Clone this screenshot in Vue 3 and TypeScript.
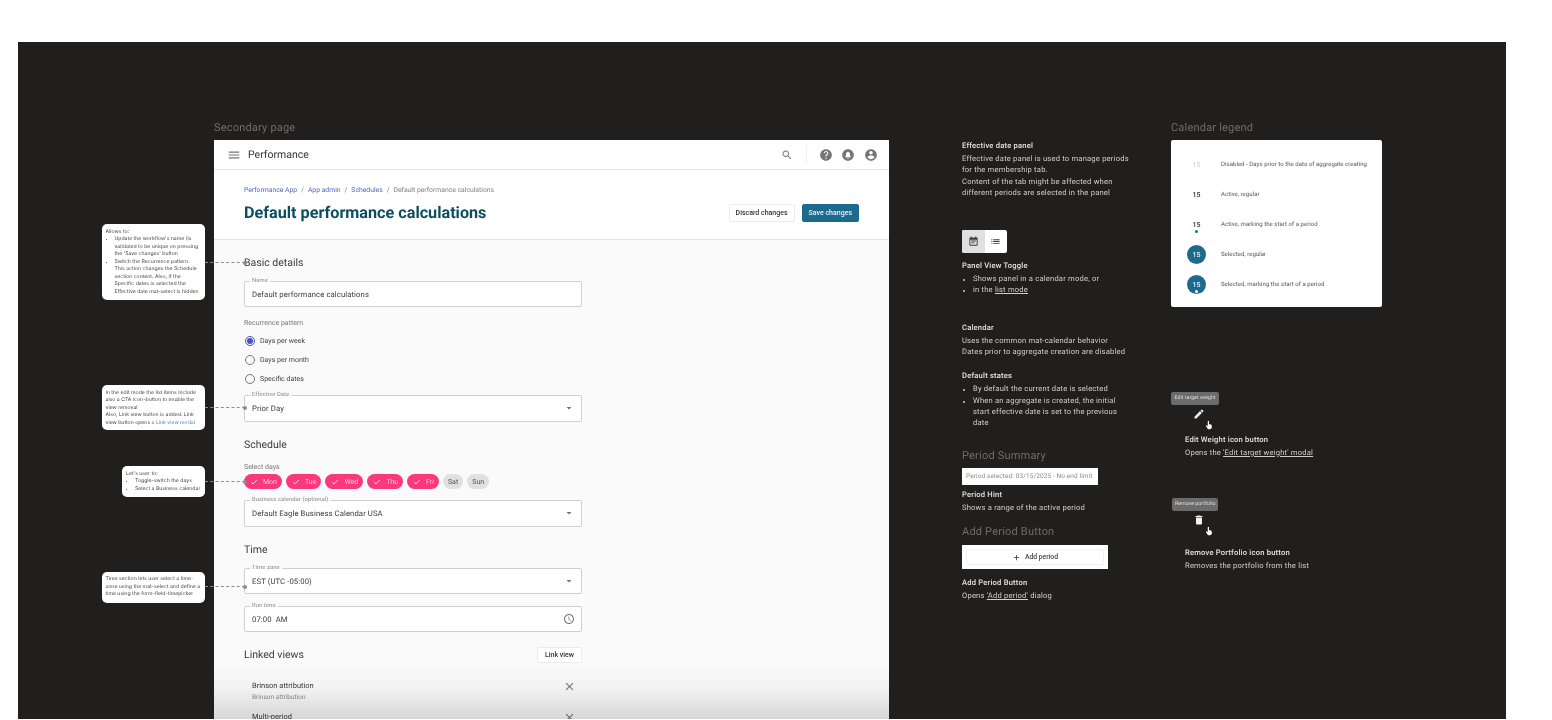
<script setup lang="ts">
const icons = {
  menu: 'M3 18h18v-2H3v2zm0-5h18v-2H3v2zm0-7v2h18V6H3z',
  search: 'M15.5 14h-.79l-.28-.27C15.41 12.59 16 11.11 16 9.5 16 5.91 13.09 3 9.5 3S3 5.91 3 9.5 5.91 16 9.5 16c1.61 0 3.09-.59 4.23-1.57l.27.28v.79l5 4.99L20.49 19l-4.99-5zm-6 0C7.01 14 5 11.99 5 9.5S7.01 5 9.5 5 14 7.01 14 9.5 11.99 14 9.5 14z',
  help: 'M12 2C6.48 2 2 6.48 2 12s4.48 10 10 10 10-4.48 10-10S17.52 2 12 2zm1 17h-2v-2h2v2zm2.07-7.75l-.9.92C13.45 12.9 13 13.5 13 15h-2v-.5c0-1.1.45-2.1 1.17-2.83l1.24-1.26c.37-.36.59-.86.59-1.41 0-1.1-.9-2-2-2s-2 .9-2 2H8c0-2.21 1.79-4 4-4s4 1.79 4 4c0 .88-.36 1.68-.93 2.25z',
  bell: 'M12 2C6.48 2 2 6.48 2 12s4.48 10 10 10 10-4.48 10-10S17.52 2 12 2zm0 16.5c-.83 0-1.5-.67-1.5-1.5h3c0 .83-.67 1.5-1.5 1.5zm5-2.5H7v-1l1.5-1.5v-3c0-1.9 1.2-3.4 3-3.8V6.5h1v.2c1.8.4 3 1.9 3 3.8v3L17 15v1z',
  account: 'M12 2C6.48 2 2 6.48 2 12s4.48 10 10 10 10-4.48 10-10S17.52 2 12 2zm0 3c1.66 0 3 1.34 3 3s-1.34 3-3 3-3-1.34-3-3 1.34-3 3-3zm0 14.2c-2.5 0-4.71-1.28-6-3.22.03-1.99 4-3.08 6-3.08 1.99 0 5.97 1.09 6 3.08-1.29 1.94-3.5 3.22-6 3.22z',
  calendar: 'M17 10H7v2h10v-2zm2-7h-1V1h-2v2H8V1H6v2H5c-1.11 0-1.99.9-1.99 2L3 19c0 1.1.89 2 2 2h14c1.1 0 2-.9 2-2V5c0-1.1-.9-2-2-2zm0 16H5V8h14v11zm-5-5H7v2h7v-2z',
  list: 'M3 13h2v-2H3v2zm0 4h2v-2H3v2zm0-8h2V7H3v2zm4 4h14v-2H7v2zm0 4h14v-2H7v2zM7 7v2h14V7H7z',
  dropdown: 'M7 10l5 5 5-5z',
  clock: 'M11.99 2C6.47 2 2 6.48 2 12s4.47 10 9.99 10C17.52 22 22 17.52 22 12S17.52 2 11.99 2zM12 20c-4.42 0-8-3.58-8-8s3.58-8 8-8 8 3.58 8 8-3.58 8-8 8zm.5-13H11v6l5.25 3.15.75-1.23-4.5-2.67z',
  close: 'M19 6.41L17.59 5 12 10.59 6.41 5 5 6.41 10.59 12 5 17.59 6.41 19 12 13.41 17.59 19 19 17.59 13.41 12z',
  check: 'M9 16.17L4.83 12l-1.42 1.41L9 19 21 7l-1.41-1.41z',
  add: 'M19 13h-6v6h-2v-6H5v-2h6V5h2v6h6v2z',
  edit: 'M3 17.25V21h3.75L17.81 9.94l-3.75-3.75L3 17.25zM20.71 7.04c.39-.39.39-1.02 0-1.41l-2.34-2.34c-.39-.39-1.02-.39-1.41 0l-1.83 1.83 3.75 3.75 1.83-1.83z',
  trash: 'M6 19c0 1.1.9 2 2 2h8c1.1 0 2-.9 2-2V7H6v12zM19 4h-3.5l-1-1h-5l-1 1H5v2h14V4z',
  hand: 'M9 3.5a1.5 1.5 0 0 1 3 0V10h1.5c.4 0 .8.1 1 .4.5-.2 1.1-.1 1.5.3.6-.2 1.4.1 1.7.6L19 16c0 3-2 6-5 6h-2c-2 0-3-1-4-2.5L4.5 14c-.6-1 .6-2.2 1.6-1.4L9 15z',
}

const days = [
  { label: 'Mon', on: true },
  { label: 'Tue', on: true },
  { label: 'Wed', on: true },
  { label: 'Thu', on: true },
  { label: 'Fri', on: true },
  { label: 'Sat', on: false },
  { label: 'Sun', on: false },
]

const radios = ['Days per week', 'Days per month', 'Specific dates']

const legend = [
  { cls: 'disabled', text: 'Disabled - Days prior to the date of aggregate creating', dot: false },
  { cls: 'active', text: 'Active, regular', dot: false },
  { cls: 'active', text: 'Active, marking the start of a period', dot: true },
  { cls: 'selected', text: 'Selected, regular', dot: false },
  { cls: 'selected', text: 'Selected, marking the start of a period', dot: true },
]
</script>

<template>
  <div class="page">
    <div class="board">
      <!-- main mockup -->
      <div class="frame-title secondary-title">Secondary page</div>
      <section class="frame">
        <header class="toolbar">
          <svg class="ic menu" viewBox="0 0 24 24"><path :d="icons.menu" /></svg>
          <span class="app-name">Performance</span>
          <svg class="ic search" viewBox="0 0 24 24"><path :d="icons.search" /></svg>
          <span class="divider"></span>
          <svg class="ic tool" viewBox="0 0 24 24"><path :d="icons.help" /></svg>
          <svg class="ic tool" viewBox="0 0 24 24"><path :d="icons.bell" /></svg>
          <svg class="ic tool" viewBox="0 0 24 24"><path :d="icons.account" /></svg>
        </header>

        <div class="page-head">
          <div>
            <nav class="crumbs">
              <a>Performance App</a><i>/</i><a>App admin</a><i>/</i><a>Schedules</a><i>/</i><span>Default performance calculations</span>
            </nav>
            <h1>Default performance calculations</h1>
          </div>
          <div class="head-actions">
            <button class="btn">Discard changes</button>
            <button class="btn primary">Save changes</button>
          </div>
        </div>

        <div class="form">
          <h2 class="first">Basic details</h2>
          <div class="field name-field">
            <label>Name</label>
            <span>Default performance calculations</span>
          </div>

          <div class="caption recurrence">Recurrence pattern</div>
          <div class="radios">
            <div v-for="(r, i) in radios" :key="r" class="radio-row">
              <span class="radio" :class="{ on: i === 0 }"></span>
              <span>{{ r }}</span>
            </div>
          </div>
          <div class="field effective-field">
            <label>Effective Date</label>
            <span>Prior Day</span>
            <svg class="ic drop" viewBox="0 0 24 24"><path :d="icons.dropdown" /></svg>
          </div>

          <h2>Schedule</h2>
          <div class="caption select-days">Select days</div>
          <div class="chips">
            <span v-for="d in days" :key="d.label" class="chip" :class="{ on: d.on }">
              <svg v-if="d.on" viewBox="0 0 24 24"><path :d="icons.check" /></svg>
              {{ d.label }}
            </span>
          </div>
          <div class="field business-field">
            <label>Business calendar (optional)</label>
            <span>Default Eagle Business Calendar USA</span>
            <svg class="ic drop" viewBox="0 0 24 24"><path :d="icons.dropdown" /></svg>
          </div>

          <h2>Time</h2>
          <div class="field name-field">
            <label>Time zone</label>
            <span>EST (UTC -05:00)</span>
            <svg class="ic drop" viewBox="0 0 24 24"><path :d="icons.dropdown" /></svg>
          </div>
          <div class="field name-field">
            <label>Run time</label>
            <span>07:00&nbsp; AM</span>
            <svg class="ic clock" viewBox="0 0 24 24"><path :d="icons.clock" /></svg>
          </div>

          <div class="linked-head">
            <h2 class="flat">Linked views</h2>
            <button class="btn link-btn">Link view</button>
          </div>
          <div class="linked-item first-item">
            <div>
              <div class="item-title">Brinson attribution</div>
              <div class="item-sub">Brinson attribution</div>
            </div>
            <svg class="ic x" viewBox="0 0 24 24"><path :d="icons.close" /></svg>
          </div>
          <div class="linked-item">
            <div>
              <div class="item-title">Multi-period</div>
              <div class="item-sub">Multi-period</div>
            </div>
            <svg class="ic x" viewBox="0 0 24 24"><path :d="icons.close" /></svg>
          </div>
        </div>
      </section>
      <div class="fade"></div>

      <!-- callouts pinned to the mockup -->
      <aside class="note note-a">
        Allows to:
        <ul>
          <li>Update the workflow's name (is validated to be unique on pressing the 'Save changes' button</li>
          <li>Switch the Recurrence pattern. This action changes the Schedule section content. Also, if the Specific dates is selected the Effective date mat-select is hidden</li>
        </ul>
      </aside>
      <aside class="note note-b">
        In the edit mode the list items include also a CTA icon-button to enable the view removal<br />
        Also, Link view button is added. Link view button opens <a>a Link view modal</a>
      </aside>
      <aside class="note note-c">
        Let's user to:
        <ul>
          <li>Toggle-switch the days</li>
          <li>Select a Business calendar</li>
        </ul>
      </aside>
      <aside class="note note-d">
        Time section lets user select a time-zone using the mat-select and define a time using the form-field-timepicker
      </aside>
      <span class="link-line line-a"></span>
      <span class="link-line line-b"></span>
      <span class="link-line line-c"></span>
      <span class="link-line line-d"></span>

      <!-- description column -->
      <section class="docs">
        <h3>Effective date panel</h3>
        <p>Effective date panel is used to manage periods for the membership tab.<br />Content of the tab might be affected when different periods are selected in the panel</p>

        <div class="toggle">
          <span class="toggle-on"><svg viewBox="0 0 24 24"><path :d="icons.calendar" /></svg></span>
          <span><svg viewBox="0 0 24 24"><path :d="icons.list" /></svg></span>
        </div>

        <h3 class="toggle-title">Panel View Toggle</h3>
        <ul>
          <li>Shows panel in a calendar mode, or</li>
          <li>in the <u>list mode</u></li>
        </ul>

        <h3 class="calendar-title">Calendar</h3>
        <p>Uses the common mat-calendar behavior<br />Dates prior to aggregate creation are disabled</p>

        <h3 class="states-title">Default states</h3>
        <ul>
          <li>By default the current date is selected</li>
          <li>When an aggregate is created, the initial start effective date is set to the previous date</li>
        </ul>

        <div class="frame-title summary-title">Period Summary</div>
        <div class="hint-box">Period selected: 03/15/2025 - No end limit</div>
        <h3 class="hint-title">Period Hint</h3>
        <p>Shows a range of the active period</p>

        <div class="frame-title add-title">Add Period Button</div>
        <div class="add-box">
          <button class="add-btn">
            <svg viewBox="0 0 24 24"><path :d="icons.add" /></svg>
            Add period
          </button>
        </div>
        <h3 class="add-caption">Add Period Button</h3>
        <p>Opens <u>'Add period'</u> dialog</p>
      </section>

      <!-- calendar legend -->
      <div class="frame-title legend-title">Calendar legend</div>
      <section class="legend">
        <div v-for="row in legend" :key="row.text" class="legend-row">
          <span class="day" :class="[row.cls, { dotted: row.dot }]">15</span>
          <span>{{ row.text }}</span>
        </div>
      </section>

      <!-- icon button specimens -->
      <section class="spec spec-edit">
        <div class="tip">Edit target weight</div>
        <div class="spec-icons">
          <svg class="spec-ic" viewBox="0 0 24 24"><path :d="icons.edit" /></svg>
          <svg class="cursor" viewBox="0 0 24 24"><path :d="icons.hand" /></svg>
        </div>
        <div class="spec-text">
          <h3>Edit Weight icon button</h3>
          <p>Opens the <u>'Edit target weight' modal</u></p>
        </div>
      </section>
      <section class="spec spec-remove">
        <div class="tip">Remove portfolio</div>
        <div class="spec-icons">
          <svg class="spec-ic" viewBox="0 0 24 24"><path :d="icons.trash" /></svg>
          <svg class="cursor" viewBox="0 0 24 24"><path :d="icons.hand" /></svg>
        </div>
        <div class="spec-text lower">
          <h3>Remove Portfolio icon button</h3>
          <p>Removes the portfolio from the list</p>
        </div>
      </section>
    </div>
  </div>
</template>

<style>
html,
body {
  margin: 0;
  background: #fff;
  overflow: hidden;
}
</style>

<style scoped>
.page {
  height: 720px;
  padding: 42px 46px 1px 18px;
  box-sizing: border-box;
  font-family: Roboto, "Liberation Sans", sans-serif;
  text-rendering: geometricPrecision;
  overflow: hidden;
}

/* the reference is a soft capture of a design board */
.board {
  position: relative;
  height: 677px;
  background: #201f1d;
  overflow: hidden;
  filter: blur(.35px);
}

.frame-title {
  color: #6c6c6c;
  font-size: 11px;
  line-height: 14px;
  letter-spacing: .2px;
}

.secondary-title,
.legend-title {
  position: absolute;
  top: 79px;
}

.secondary-title {
  left: 196px;
}

.legend-title {
  left: 1153px;
}

/* mockup frame */
.frame {
  position: absolute;
  left: 196px;
  top: 98px;
  width: 675px;
  background: #fafafa;
  color: #333;
}

.ic {
  display: block;
  fill: #757575;
  flex: none;
}

.toolbar {
  height: 30px;
  display: flex;
  align-items: center;
  padding: 0 11.5px 0 13px;
  background: #fff;
  border-bottom: 1px solid #e8e8e8;
  box-sizing: border-box;
}

.menu {
  width: 14px;
  height: 14px;
  margin-right: 7px;
}

.app-name {
  font-size: 10.5px;
  color: #333;
}

.search {
  width: 12px;
  height: 12px;
  margin-left: auto;
}

.divider {
  width: 1px;
  height: 18px;
  background: #eee;
  margin: 0 12px 0 13px;
}

.tool {
  width: 14px;
  height: 14px;
  margin-left: 8.5px;
}

.divider + .tool {
  margin-left: 0;
}

.page-head {
  height: 70px;
  box-sizing: border-box;
  padding: 15px 30px 0;
  display: flex;
  justify-content: space-between;
  background: #fff;
  border-bottom: 1px solid #e6e6e6;
}

.crumbs {
  font-size: 6.8px;
  line-height: 10px;
  color: #808080;
}

.crumbs a {
  color: #5565c4;
}

.crumbs i {
  font-style: normal;
  margin: 0 4px;
}

h1 {
  margin: 7px 0 0;
  font-size: 16.2px;
  line-height: 22px;
  font-weight: 700;
  color: #0a4d63;
}

.head-actions {
  display: flex;
  gap: 7px;
  margin-top: 19px;
  align-items: flex-start;
}

.btn {
  height: 17.5px;
  padding: 0 6px;
  font: 500 7px Roboto, sans-serif;
  color: #333;
  background: #fff;
  border: 1px solid #ececec;
  border-radius: 2px;
}

.btn.primary {
  background: #1d6a8f;
  border-color: #1d6a8f;
  color: #e8f2f6;
}

.form {
  padding: 15px 307px 0 30px;
}

h2 {
  margin: 15.5px 0 -2px;
  font-size: 10.5px;
  line-height: 16px;
  font-weight: 400;
  color: #3a3a3a;
}

h2.first {
  margin-top: 0;
}

h2.flat {
  margin: 0;
}

.field {
  position: relative;
  height: 26px;
  margin-top: 12px;
  padding: 0 7px;
  display: flex;
  align-items: center;
  justify-content: space-between;
  background: #fff;
  border: 1px solid #cfcfcf;
  border-radius: 2px;
  box-sizing: border-box;
  font-size: 7.7px;
  color: #3a3a3a;
  letter-spacing: .1px;
}

.field label {
  position: absolute;
  left: 5px;
  top: -4px;
  padding: 0 2px;
  font-size: 5.8px;
  line-height: 7px;
  color: #8a8a8a;
  background: linear-gradient(#fafafa 50%, #fff 50%);
}

.effective-field {
  margin-top: 6.5px;
  height: 26.5px;
}

.business-field {
  margin-top: 11px;
  height: 26.5px;
}

.drop {
  width: 12px;
  height: 12px;
  margin-right: -1px;
}

.clock {
  width: 12px;
  height: 12px;
  margin-right: -1px;
}

.caption {
  font-size: 7px;
  line-height: 10px;
  color: #777;
}

.recurrence {
  margin-top: 11px;
}

.select-days {
  margin-top: 11px;
}

.radios {
  margin-top: 3.5px;
}

.radio-row {
  height: 19px;
  display: flex;
  align-items: center;
  gap: 5px;
  padding-left: 1px;
  font-size: 7px;
  color: #444;
}

.radio {
  width: 10px;
  height: 10px;
  border: 1px solid #777;
  border-radius: 50%;
  box-sizing: border-box;
  display: grid;
  place-items: center;
}

.radio.on {
  border-color: #4353b8;
}

.radio.on::after {
  content: "";
  width: 6px;
  height: 6px;
  border-radius: 50%;
  background: #4353b8;
}

.chips {
  display: flex;
  gap: 4px;
  margin-top: 2px;
}

.chip {
  height: 15px;
  padding: 0 5px;
  display: flex;
  align-items: center;
  gap: 5px;
  border-radius: 8px;
  font-size: 7px;
  background: #e0e0e0;
  color: #555;
}

.chip.on {
  padding: 0 5px 0 6px;
  background: #f9397c;
  color: #ffc4d8;
}

.chip svg {
  width: 8px;
  height: 8px;
  fill: #fff;
}

.linked-head {
  display: flex;
  align-items: center;
  justify-content: space-between;
  height: 16px;
  margin-top: 15px;
}

.link-btn {
  height: 16px;
  padding: 0 7px;
}

.linked-item {
  height: 31px;
  padding: 0 7px 0 8px;
  display: flex;
  justify-content: space-between;
}

.first-item {
  margin-top: 17px;
}

.item-title {
  font-size: 7.5px;
  line-height: 12px;
  color: #3a3a3a;
}

.item-sub {
  font-size: 6.5px;
  line-height: 10px;
  color: #8a8a8a;
}

.x {
  width: 13px;
  height: 13px;
  margin-right: -1px;
}

.fade {
  position: absolute;
  left: 196px;
  top: 620px;
  width: 675px;
  height: 57px;
  background: linear-gradient(rgba(0, 0, 0, 0), rgba(0, 0, 0, .03) 45%, rgba(0, 0, 0, .14));
}

/* callouts */
.note {
  position: absolute;
  box-sizing: border-box;
  padding: 4.5px 3px 4.5px 4px;
  background: #fff;
  border-radius: 5px;
  font-family: Inter, "Liberation Sans", sans-serif;
  font-size: 5.15px;
  line-height: 7.5px;
  color: #444;
}

.note ul {
  margin: 0;
  padding-left: 9px;
}

.note a {
  color: #3b8fe6;
}

.note-a {
  left: 83.5px;
  top: 182px;
  width: 103px;
  height: 76px;
}

.note-b {
  left: 83.5px;
  top: 343px;
  width: 103px;
  height: 45px;
}

.note-c {
  left: 104px;
  top: 424px;
  width: 82.5px;
  height: 31px;
}

.note-d {
  left: 83.5px;
  top: 529.5px;
  width: 103px;
  height: 31px;
}

.link-line {
  position: absolute;
  left: 186.5px;
  width: 40px;
  border-top: 1px dashed #8c8c8c;
}

.link-line::after {
  content: "";
  position: absolute;
  right: -2px;
  top: -2.5px;
  width: 4px;
  height: 4px;
  border-radius: 50%;
  background: #8c8c8c;
}

.line-a {
  top: 220px;
}

.line-b {
  top: 365px;
}

.line-c {
  top: 439px;
}

.line-d {
  top: 544px;
}

/* description column */
.docs {
  position: absolute;
  left: 944px;
  top: 97px;
  width: 172px;
  color: #cfcfcf;
  font-size: 7.6px;
  line-height: 11.3px;
  letter-spacing: .2px;
}

h3 {
  margin: 0 0 -2px;
  font-size: 7.6px;
  line-height: 14px;
  font-weight: 500;
  color: #e4e4e4;
}

.docs p {
  margin: 2px 0 0;
}

.docs ul {
  margin: 2px 0 0;
  padding: 0 14px 0 11px;
}

.docs li::marker {
  font-size: 6px;
}

.toggle {
  display: flex;
  width: 45px;
  height: 22.5px;
  margin-top: 32px;
  background: #fff;
  border-radius: 2px;
  overflow: hidden;
}

.toggle span {
  flex: 1;
  display: grid;
  place-items: center;
}

.toggle .toggle-on {
  background: #e0e0e0;
}

.toggle svg {
  width: 11px;
  height: 11px;
  fill: #3a3a3a;
}

.toggle-title {
  margin-top: 6.5px;
}

.calendar-title {
  margin-top: 25.4px;
}

.states-title {
  margin-top: 11.5px;
}

.summary-title {
  margin: 20px 0 -2px;
  line-height: 16px;
}

.hint-box {
  width: 136px;
  height: 17px;
  margin-top: 6px;
  padding-left: 4px;
  box-sizing: border-box;
  background: #fff;
  color: #8a8a8a;
  font-size: 6.5px;
  line-height: 17px;
  letter-spacing: .1px;
}

.hint-title {
  margin-top: 3px;
}

.add-title {
  margin: 10.7px 0 -2px;
  line-height: 16px;
}

.add-box {
  width: 146px;
  height: 24px;
  margin-top: 7px;
  padding: 4px;
  box-sizing: border-box;
  background: #fff;
}

.add-btn {
  width: 100%;
  height: 16px;
  display: flex;
  align-items: center;
  justify-content: center;
  gap: 4px;
  padding: 0;
  background: #fff;
  border: 1px solid #f0f0f0;
  border-radius: 2px;
  font: 500 6.8px Roboto, sans-serif;
  color: #444;
}

.add-btn svg {
  width: 9px;
  height: 9px;
  fill: #333;
}

.add-caption {
  margin-top: 7px;
}

/* legend */
.legend {
  position: absolute;
  left: 1153px;
  top: 98px;
  width: 211px;
  height: 167px;
  padding-top: 9.5px;
  box-sizing: border-box;
  background: #fff;
  border-radius: 2px;
}

.legend-row {
  height: 30px;
  display: flex;
  align-items: center;
  font-size: 6px;
  color: #555;
  letter-spacing: .05px;
}

.day {
  position: relative;
  width: 19px;
  height: 19px;
  margin: 0 15px 0 16px;
  display: grid;
  place-items: center;
  border-radius: 50%;
  font-size: 7px;
  font-weight: 500;
  color: #333;
}

.day.disabled {
  color: #ccc;
  font-weight: 400;
}

.day.selected {
  background: #1d6a8f;
  color: #e8f2f6;
}

.day.dotted::after {
  content: "";
  position: absolute;
  left: 8px;
  bottom: 1px;
  width: 3px;
  height: 3px;
  border-radius: 50%;
  background: #1d6a8f;
}

.day.selected.dotted::after {
  background: #fff;
}

/* icon button specimens */
.spec {
  position: absolute;
  left: 1153px;
  width: 200px;
  color: #cfcfcf;
  font-size: 7.6px;
  line-height: 11.3px;
  letter-spacing: .2px;
}

.spec-edit {
  top: 349.5px;
}

.spec-remove {
  top: 455.5px;
}

.tip {
  display: inline-block;
  height: 13px;
  padding: 0 3.5px;
  background: #6b6b6b;
  border-radius: 2px;
  font-size: 5.3px;
  line-height: 13px;
  letter-spacing: 0;
  color: #ddd;
  vertical-align: top;
}

.spec-remove .tip {
  margin-left: 1px;
  padding: 0 3px;
}

.spec-icons {
  position: relative;
  height: 26px;
  padding-left: 22px;
}

.spec-ic {
  display: block;
  width: 12px;
  height: 12px;
  margin-top: 3px;
  fill: #f2f2f2;
}

.cursor {
  position: absolute;
  left: 33px;
  top: 12px;
  width: 10px;
  height: 10px;
  fill: #fff;
}

.spec-text {
  padding-left: 14px;
}

.spec-text h3 {
  margin: 0;
  line-height: 12px;
}

.spec-text.lower {
  margin-top: 7px;
}

.spec-text p {
  margin: 1px 0 0;
}
</style>
